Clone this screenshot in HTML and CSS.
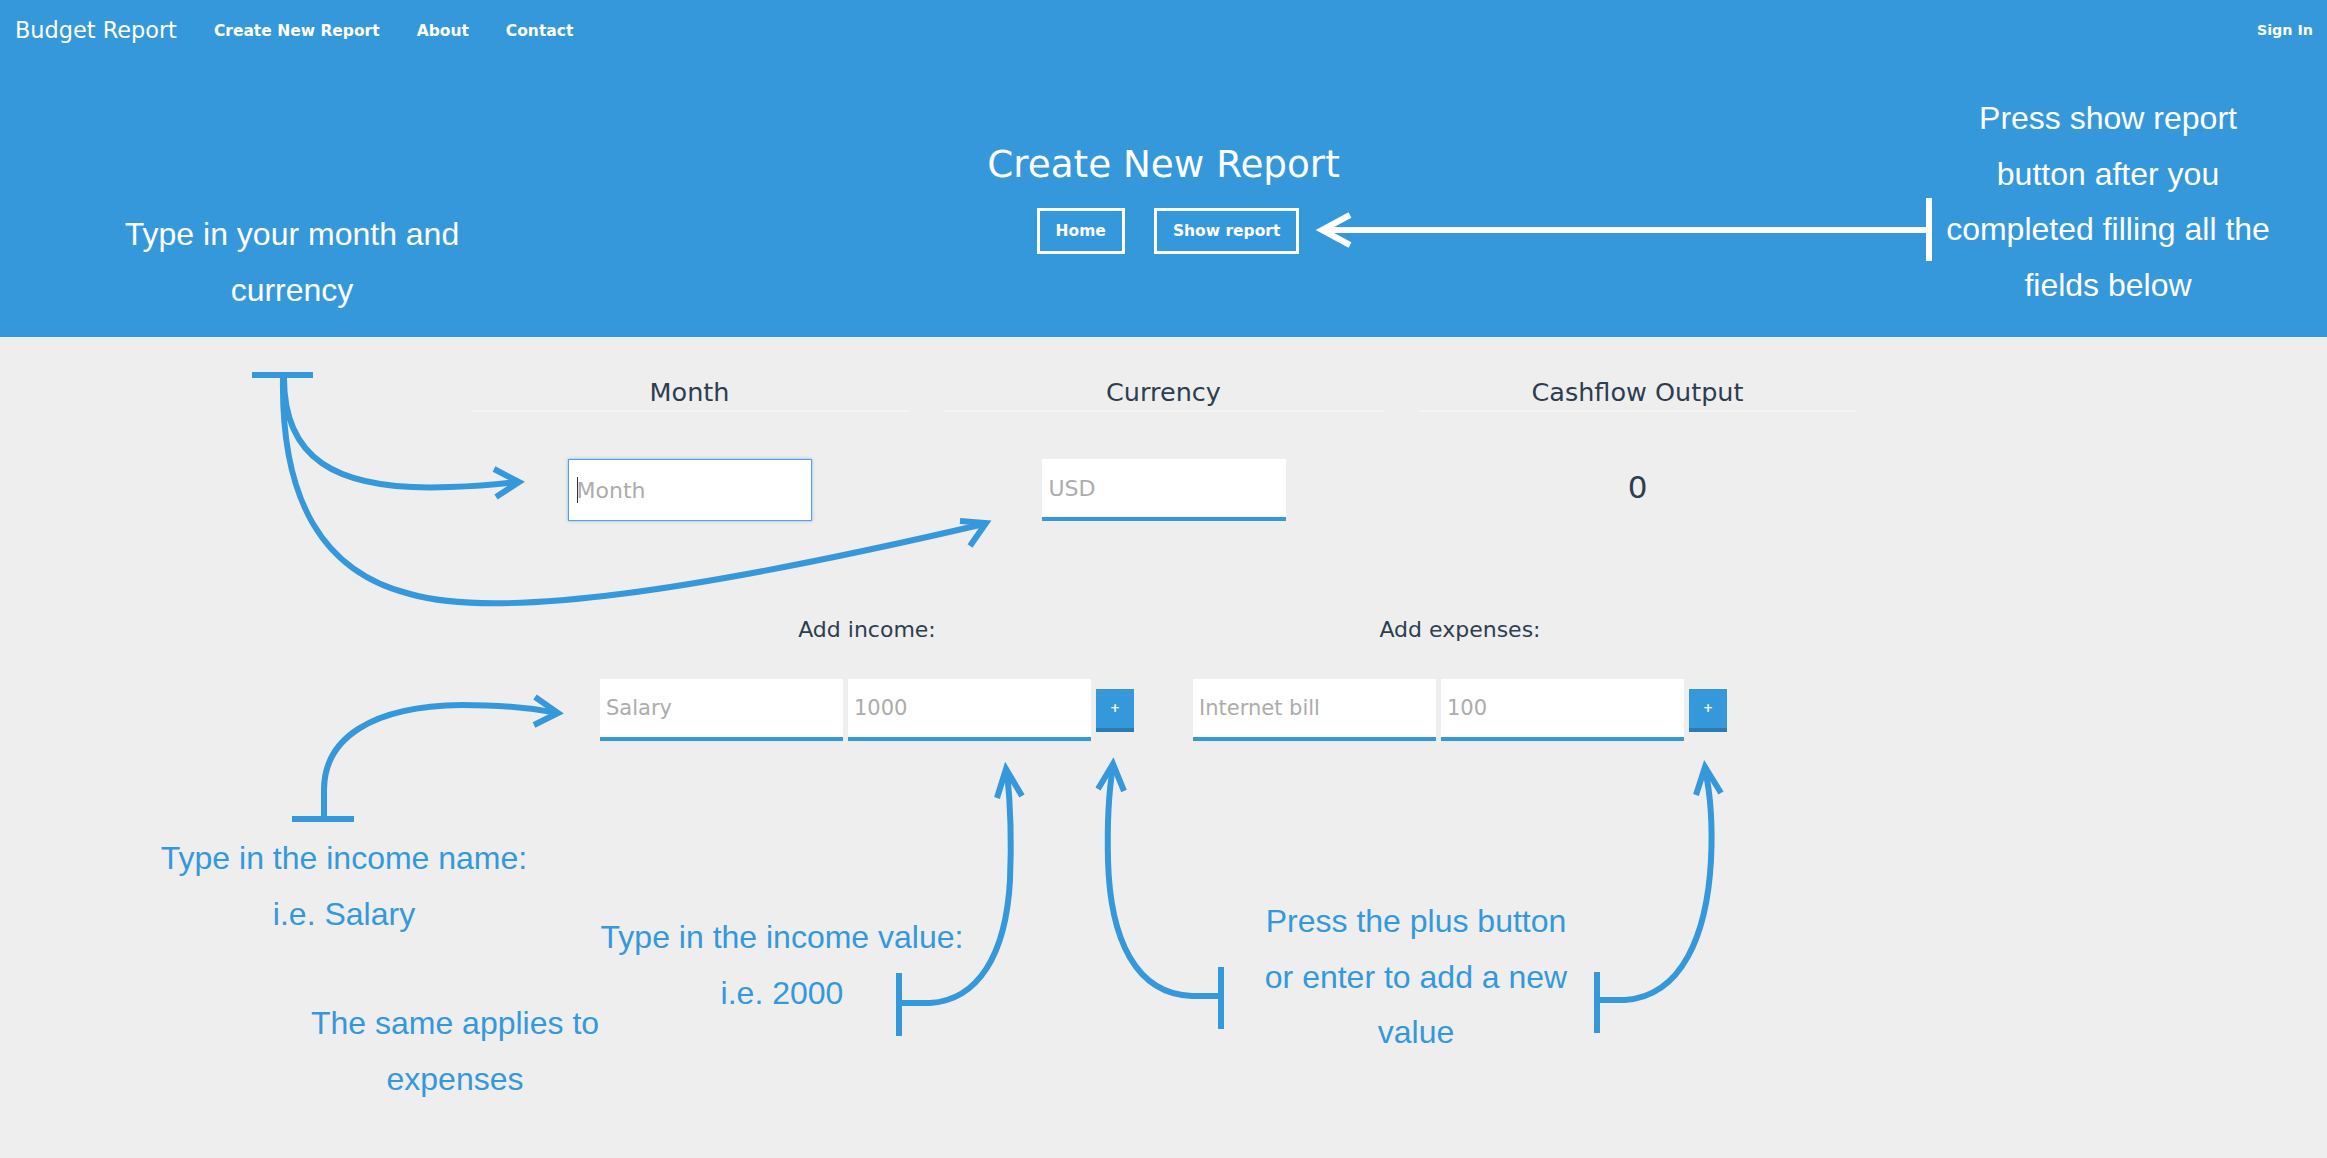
FILE: index.html
```html
<!DOCTYPE html>
<html lang="en">
<head>
<meta charset="utf-8">
<title>Budget Report - Create New Report</title>
<link rel="stylesheet" href="styles.css">
</head>
<body>
  <header class="hero">
    <nav class="topnav">
      <a class="brand" href="#">Budget Report</a>
      <ul class="nav-links">
        <li><a href="#">Create New Report</a></li>
        <li><a href="#">About</a></li>
        <li><a href="#">Contact</a></li>
      </ul>
      <a class="signin" href="#">Sign In</a>
    </nav>
    <div class="hero-body">
      <h1>Create New Report</h1>
      <div class="hero-actions">
        <a class="btn-outline" href="#">Home</a>
        <a class="btn-outline" href="#">Show report</a>
      </div>
    </div>
  </header>

  <main class="report">
    <section class="summary">
      <div class="col">
        <h2>Month</h2>
        <div class="col-body">
          <span class="field-wrap">
            <input class="field field-focus" type="text" placeholder="Month">
            <span class="caret"></span>
          </span>
        </div>
      </div>
      <div class="col">
        <h2>Currency</h2>
        <div class="col-body">
          <input class="field field-line" type="text" placeholder="USD">
        </div>
      </div>
      <div class="col">
        <h2>Cashflow Output</h2>
        <div class="col-body">
          <span class="cash">0</span>
        </div>
      </div>
    </section>

    <section class="entries">
      <div class="entry-group">
        <h3>Add income:</h3>
        <div class="entry-row">
          <input class="field field-line field-sm" type="text" placeholder="Salary">
          <input class="field field-line field-sm" type="text" placeholder="1000">
          <button class="add-btn" type="button">+</button>
        </div>
      </div>
      <div class="entry-group">
        <h3>Add expenses:</h3>
        <div class="entry-row">
          <input class="field field-line field-sm" type="text" placeholder="Internet bill">
          <input class="field field-line field-sm" type="text" placeholder="100">
          <button class="add-btn" type="button">+</button>
        </div>
      </div>
    </section>
  </main>

  <div class="tutorial">
    <svg class="guides" viewBox="0 0 2327 1158" xmlns="http://www.w3.org/2000/svg">
      <g class="guide-light">
        <line x1="1324" y1="230" x2="1929" y2="230" stroke-width="6"/>
        <line x1="1929" y1="198" x2="1929" y2="261" stroke-width="7"/>
        <polyline points="1350,215 1322,230 1350,245" stroke-width="6"/>
      </g>
      <g class="guide-blue">
        <line x1="252" y1="375" x2="313" y2="375" stroke-width="6"/>
        <path d="M284,378 C284,455 330,492 450,487 C480,486 500,484 516,482"/>
        <polyline points="494,469 519,482 496,497"/>
        <path d="M283,378 C281,500 322,572 410,594 C500,620 700,590 984,524"/>
        <polyline points="960,521 986,523 970,546"/>

        <line x1="292" y1="819" x2="354" y2="819" stroke-width="6"/>
        <path d="M324,819 L324,790 C324,738 372,706 462,705 C500,705 532,708 556,713"/>
        <polyline points="535,697 558,713 534,725"/>

        <line x1="899" y1="973" x2="899" y2="1036"/>
        <path d="M899,1003 L930,1003 C978,1000 1006,955 1010,880 C1012,835 1010,800 1007,771"/>
        <polyline points="997,798 1006,769 1022,796"/>

        <line x1="1221" y1="967" x2="1221" y2="1029"/>
        <path d="M1221,996 L1192,996 C1136,994 1110,940 1108,860 C1107,820 1109,790 1113,766"/>
        <polyline points="1098,789 1113,764 1124,791"/>

        <line x1="1597" y1="972" x2="1597" y2="1033"/>
        <path d="M1597,1000 L1625,1000 C1682,996 1707,935 1711,860 C1713,820 1710,792 1705,769"/>
        <polyline points="1696,795 1705,767 1721,793"/>
      </g>
    </svg>

    <p class="note note-light note-month">Type in your month and<br>currency</p>
    <p class="note note-light note-show">Press show report<br>button after you<br>completed filling all the<br>fields below</p>
    <p class="note note-blue note-name">Type in the income name:<br>i.e. Salary</p>
    <p class="note note-blue note-value">Type in the income value:<br>i.e. 2000</p>
    <p class="note note-blue note-same">The same applies to<br>expenses</p>
    <p class="note note-blue note-plus">Press the plus button<br>or enter to add a new<br>value</p>
  </div>
</body>
</html>
```

FILE: styles.css
```css
html, body {
  margin: 0;
  padding: 0;
}

body {
  position: relative;
  height: 1158px;
  overflow: hidden;
  background: #eeeeee;
  color: #2c3e50;
  font-family: "DejaVu Sans", "Noto Sans", sans-serif;
}

a {
  color: #fff;
  text-decoration: none;
}

/* ---------- header ---------- */
.hero {
  background: #3598db;
  color: #fff;
}

.topnav {
  height: 60px;
  display: flex;
  align-items: center;
  padding: 0 14px 0 15px;
}

.brand {
  font-size: 22.4px;
  margin-right: 37px;
}

.nav-links {
  display: flex;
  gap: 37px;
  list-style: none;
  margin: 0;
  padding: 0;
}

.nav-links a,
.signin {
  font-size: 15.5px;
  font-weight: bold;
}

.signin {
  margin-left: auto;
  font-size: 14.3px;
}

.hero-body {
  padding: 86px 0 83px;
  text-align: center;
}

.hero-body h1 {
  margin: 0;
  font-size: 37.3px;
  line-height: 37px;
  font-weight: normal;
}

.hero-actions {
  margin-top: 25px;
  display: flex;
  justify-content: center;
  gap: 29px;
  padding-left: 9px;
}

.btn-outline {
  box-sizing: border-box;
  height: 46px;
  display: flex;
  align-items: center;
  padding: 0 16px;
  border: 3px solid #fff;
  font-size: 15.5px;
  font-weight: bold;
}

/* ---------- summary ---------- */
.summary {
  width: 1422px;
  margin: 43px auto 0;
  display: grid;
  grid-template-columns: repeat(3, 1fr);
}

.col {
  padding: 0 18px;
}

.col h2 {
  margin: 0;
  padding-bottom: 5px;
  border-bottom: 2px solid #f4f4f4;
  font-size: 25.5px;
  line-height: 25px;
  font-weight: normal;
  text-align: center;
}

.col-body {
  margin-top: 47px;
  height: 62px;
  display: flex;
  align-items: center;
  justify-content: center;
}

.field-wrap {
  position: relative;
  display: block;
}

.field {
  box-sizing: border-box;
  display: block;
  width: 244px;
  height: 62px;
  margin: 0;
  padding: 0 7px;
  border: 0;
  border-radius: 0;
  outline: none;
  background: #fff;
  color: #2c3e50;
  font-family: "DejaVu Sans", sans-serif;
  font-size: 22px;
}

.field::placeholder {
  color: #acacac;
  opacity: 1;
}

.field-focus {
  border: 1px solid #5b9ee6;
  box-shadow: 0 0 3px rgba(90, 158, 230, 0.7);
  padding-left: 8px;
}

.field-line {
  border-bottom: 4px solid #3598db;
}

.caret {
  position: absolute;
  left: 9px;
  top: 18px;
  width: 1px;
  height: 26px;
  background: #333;
}

.cash {
  font-size: 31px;
  padding-bottom: 6px;
}

/* ---------- entries ---------- */
.entries {
  width: 1186px;
  margin: 98px auto 0;
  display: grid;
  grid-template-columns: 1fr 1fr;
}

.entry-group {
  display: flex;
  flex-direction: column;
  align-items: center;
}

.entry-group h3 {
  margin: 0;
  font-size: 22px;
  line-height: 22px;
  font-weight: normal;
}

.entry-row {
  margin-top: 38px;
  display: flex;
  align-items: center;
  gap: 5px;
}

.field-sm {
  width: 243px;
  font-size: 21px;
  padding-left: 6px;
}

.add-btn {
  box-sizing: border-box;
  width: 38px;
  height: 43px;
  padding: 0;
  border: 0;
  border-bottom: 4px solid #2a7bb2;
  background: #3598db;
  color: #fff;
  font-family: "DejaVu Sans", sans-serif;
  font-size: 12px;
  font-weight: bold;
}

/* ---------- tutorial overlay ---------- */
.guides {
  position: absolute;
  left: 0;
  top: 0;
  width: 2327px;
  height: 1158px;
  pointer-events: none;
}

.guides line,
.guides path,
.guides polyline {
  fill: none;
  stroke-width: 6;
  stroke-linejoin: miter;
}

.guide-light line,
.guide-light polyline {
  stroke: #ffffff;
}

.guide-blue line,
.guide-blue path,
.guide-blue polyline {
  stroke: #3598db;
}

.note {
  position: absolute;
  width: 400px;
  margin: 0;
  text-align: center;
  font-family: "Liberation Sans", Arial, sans-serif;
  font-size: 32px;
  line-height: 55.5px;
}

.note-light {
  color: #fff;
}

.note-blue {
  color: #3598db;
}

.note-month { left: 92px;   top: 207px; }
.note-show  { left: 1908px; top: 91px; }
.note-name  { left: 144px;  top: 831px; }
.note-value { left: 582px;  top: 910px; }
.note-same  { left: 255px;  top: 996px; }
.note-plus  { left: 1216px; top: 894px; }
```
